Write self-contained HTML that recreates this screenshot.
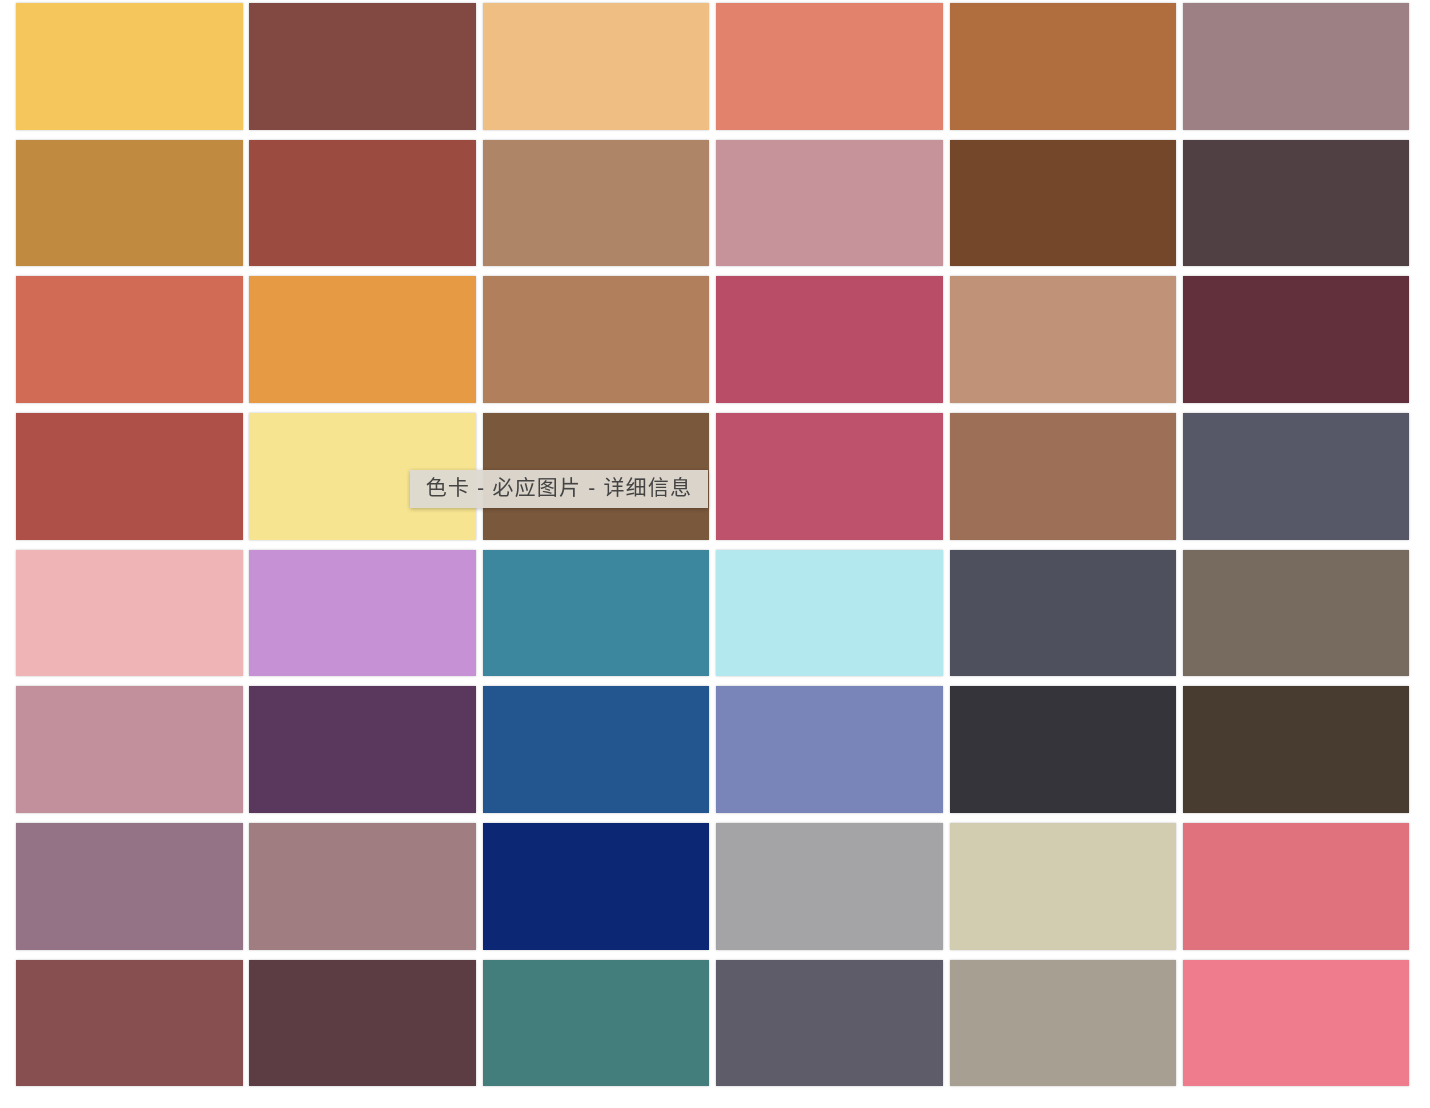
<!DOCTYPE html>
<html><head><meta charset="utf-8"><style>
html,body{margin:0;padding:0;background:#fff;width:1430px;height:1108px;overflow:hidden;position:relative}
.g{position:absolute;left:16px;top:3px;display:grid;grid-template-columns:repeat(6,226.5px);column-gap:6.9px;grid-auto-rows:126.5px;row-gap:10.2px}
.g div{box-shadow:0 0 2px rgba(0,0,0,.25)}
.tip{position:absolute;left:410px;top:470px;width:298px;height:38px;background:rgba(222,218,208,.96);box-shadow:0 1px 4px rgba(0,0,0,.25);font-family:"Liberation Sans","Noto Sans CJK SC",sans-serif;font-size:21px;color:#444;line-height:38px;text-align:center;letter-spacing:1.2px;white-space:nowrap}
</style></head><body>
<div class="g">
<div style="background:#f5c65c"></div><div style="background:#824842"></div><div style="background:#efbe83"></div><div style="background:#e3826c"></div><div style="background:#b06d3d"></div><div style="background:#9d8084"></div>
<div style="background:#c08b40"></div><div style="background:#9b4b40"></div><div style="background:#af8567"></div><div style="background:#c6939b"></div><div style="background:#74472b"></div><div style="background:#503f43"></div>
<div style="background:#d16b55"></div><div style="background:#e59a43"></div><div style="background:#b27f5c"></div><div style="background:#b94c67"></div><div style="background:#c09278"></div><div style="background:#62303d"></div>
<div style="background:#ae5048"></div><div style="background:#f6e490"></div><div style="background:#7a583c"></div><div style="background:#be516b"></div><div style="background:#9e6f57"></div><div style="background:#575867"></div>
<div style="background:#efb4b5"></div><div style="background:#c792d5"></div><div style="background:#3c879d"></div><div style="background:#b3e8ee"></div><div style="background:#4f505d"></div><div style="background:#776a5f"></div>
<div style="background:#c2909d"></div><div style="background:#5a375d"></div><div style="background:#23568f"></div><div style="background:#7985b9"></div><div style="background:#35343a"></div><div style="background:#483b30"></div>
<div style="background:#957387"></div><div style="background:#a07d81"></div><div style="background:#0c2774"></div><div style="background:#a4a3a5"></div><div style="background:#d2ccb0"></div><div style="background:#df727d"></div>
<div style="background:#884f51"></div><div style="background:#5c3d43"></div><div style="background:#437d7c"></div><div style="background:#5e5c69"></div><div style="background:#a69f92"></div><div style="background:#ee7c8c"></div>
</div>
<div class="tip">色卡 - 必应图片 - 详细信息</div>
</body></html>
